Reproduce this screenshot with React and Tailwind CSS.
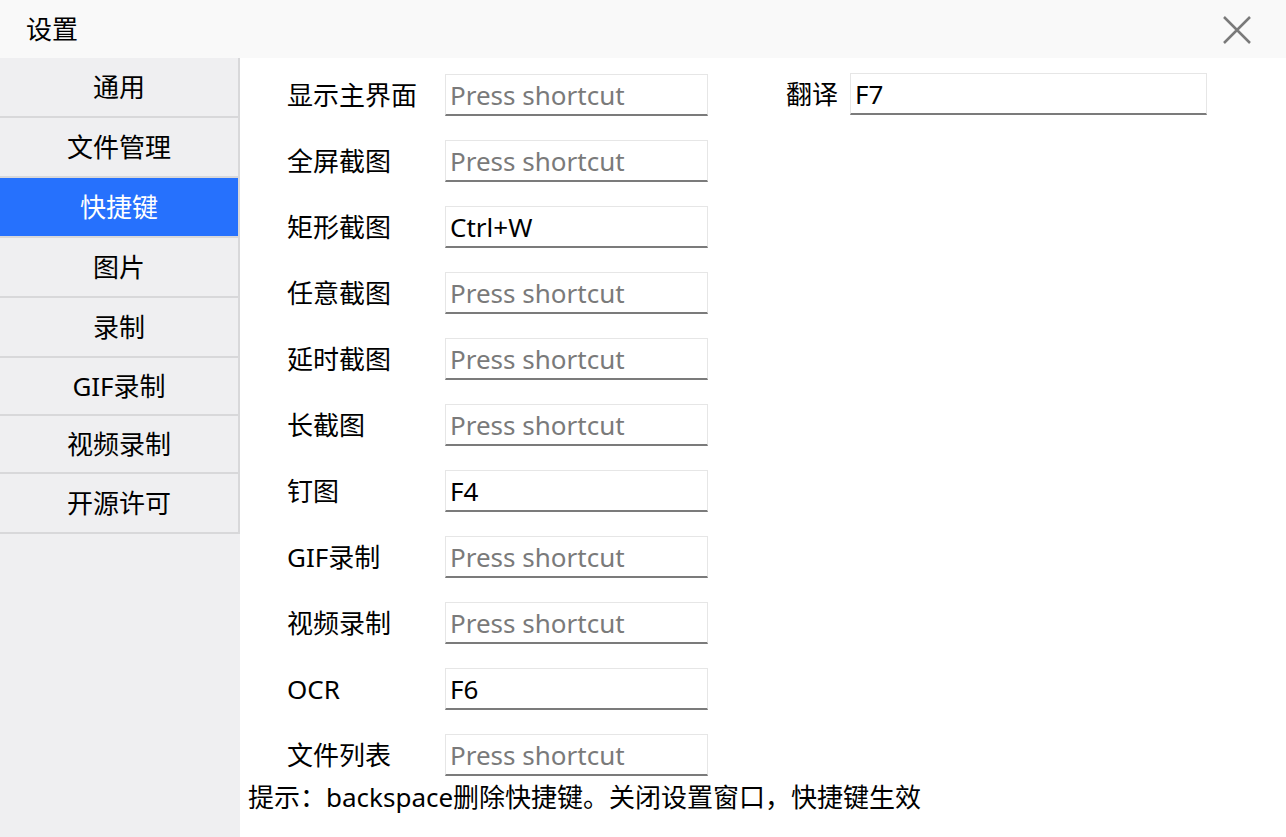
import { useState } from "react";

const font = { fontFamily: '"Noto Sans", "Noto Sans CJK SC", sans-serif' };

const menu = [
  { label: "通用", h: "h-[60px]" },
  { label: "文件管理", h: "h-[60px]" },
  { label: "快捷键", h: "h-[60px]" },
  { label: "图片", h: "h-[60px]" },
  { label: "录制", h: "h-[60px]" },
  { label: "GIF录制", h: "h-[58px]" },
  { label: "视频录制", h: "h-[58px]" },
  { label: "开源许可", h: "h-[60px]" },
];

const shortcuts = [
  ["显示主界面", ""],
  ["全屏截图", ""],
  ["矩形截图", "Ctrl+W"],
  ["任意截图", ""],
  ["延时截图", ""],
  ["长截图", ""],
  ["钉图", "F4"],
  ["GIF录制", ""],
  ["视频录制", ""],
  ["OCR", "F6"],
  ["文件列表", ""],
];

function ShortcutInput({ value, width }) {
  return (
    <div
      className={`${width} h-[42px] flex items-center border border-[#e6e6e6] border-b-2 border-b-[#7b7b7b] bg-white px-[4px] text-[26px] leading-none`}
    >
      {value ? (
        <span className="text-black">{value}</span>
      ) : (
        <span className="text-[#7a7a7a]">Press shortcut</span>
      )}
    </div>
  );
}

export default function App() {
  const [active, setActive] = useState("快捷键");

  return (
    <div className="w-[1286px] h-[837px] flex flex-col bg-white overflow-hidden" style={font}>
      {/* Title bar */}
      <div className="h-[58px] shrink-0 bg-[#f9f9f9] flex items-center justify-between pl-[26px] pr-[34px]">
        <span className="text-[26px] text-black">设置</span>
        <svg width="30" height="30" viewBox="0 0 30 30" className="mt-[2px]">
          <path d="M2 2L28 28M28 2L2 28" stroke="#7a7a7a" strokeWidth="2.5" />
        </svg>
      </div>

      <div className="flex flex-1 min-h-0">
        {/* Sidebar */}
        <div className="w-[240px] shrink-0 bg-[#efeff1]">
          <div className="border-r-2 border-[#d8d8da]">
            {menu.map((m) => (
              <div
                key={m.label}
                onClick={() => setActive(m.label)}
                className={`${m.h} flex items-center justify-center text-[26px] border-b-2 border-[#d8d8da] ${
                  active === m.label ? "bg-[#2671fd] text-white" : "text-black"
                }`}
              >
                {m.label}
              </div>
            ))}
          </div>
        </div>

        {/* Content */}
        <div className="flex-1 flex flex-col">
          <div className="flex pt-[16px] pl-[47px]">
            <div className="flex flex-col gap-[24px]">
              {shortcuts.map(([label, value]) => (
                <div key={label} className="flex items-center">
                  <span className="w-[158px] text-[26px] text-black">{label}</span>
                  <ShortcutInput value={value} width="w-[263px]" />
                </div>
              ))}
            </div>
            <div className="flex items-center self-start ml-[78px] -mt-[1px]">
              <span className="w-[64px] text-[26px] text-black">翻译</span>
              <ShortcutInput value="F7" width="w-[357px]" />
            </div>
          </div>
          <div className="pl-[8px] pt-[2px] text-[26px] text-black">
            提示：backspace删除快捷键。关闭设置窗口，快捷键生效
          </div>
        </div>
      </div>
    </div>
  );
}
